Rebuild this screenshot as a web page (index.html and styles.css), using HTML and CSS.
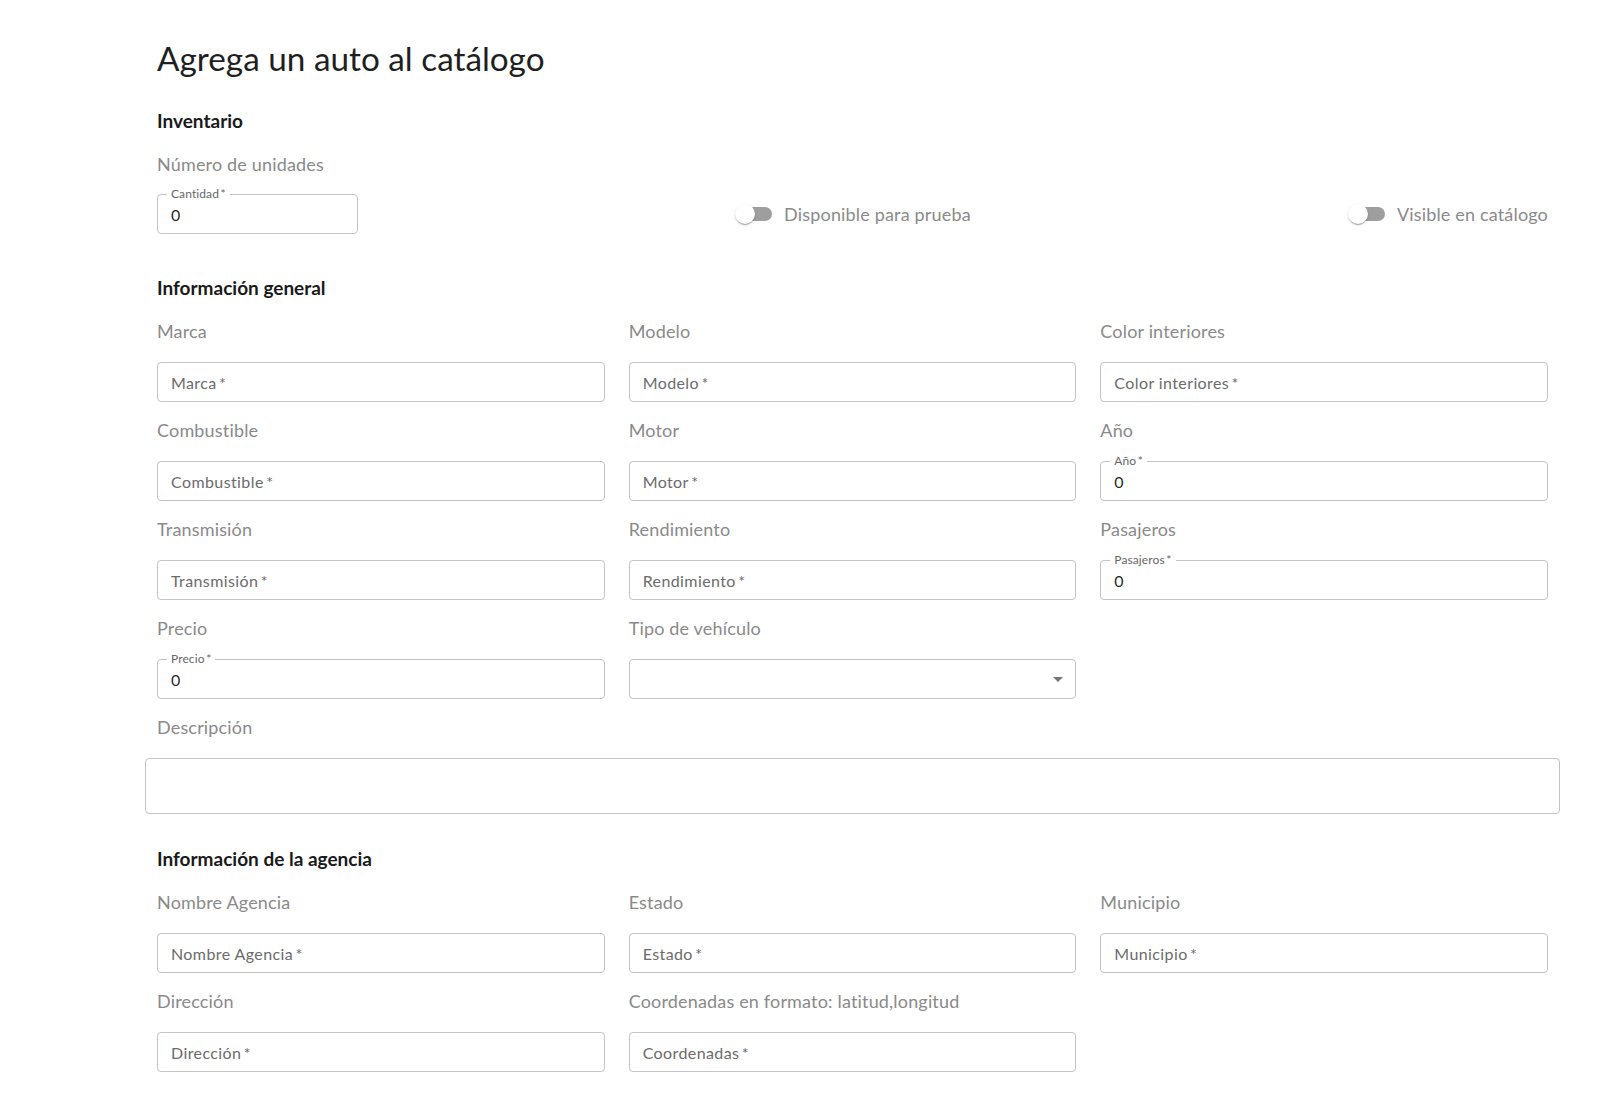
FILE: index.html
```html
<!DOCTYPE html>
<html lang="es">
<head>
<meta charset="utf-8">
<title>Agrega un auto al catálogo</title>
<link rel="stylesheet" href="styles.css">
</head>
<body>
<main class="page">
  <h1 class="title">Agrega un auto al catálogo</h1>

  <h2 class="section">Inventario</h2>
  <div class="label">Número de unidades</div>
  <div class="inv-row">
    <div class="input filled qty"><span class="float">Cantidad&#8201;*</span><span class="value">0</span></div>
    <div class="toggle">
      <span class="switch"><span class="track"></span><span class="thumb"></span></span>
      <span class="toggle-text">Disponible para prueba</span>
    </div>
    <div class="toggle">
      <span class="switch"><span class="track"></span><span class="thumb"></span></span>
      <span class="toggle-text">Visible en catálogo</span>
    </div>
  </div>

  <h2 class="section sec-general">Información general</h2>
  <div class="grid">
    <div class="field"><div class="label">Marca</div><div class="input"><span class="ph">Marca&#8201;*</span></div></div>
    <div class="field"><div class="label">Modelo</div><div class="input"><span class="ph">Modelo&#8201;*</span></div></div>
    <div class="field"><div class="label">Color interiores</div><div class="input"><span class="ph">Color interiores&#8201;*</span></div></div>

    <div class="field"><div class="label">Combustible</div><div class="input"><span class="ph">Combustible&#8201;*</span></div></div>
    <div class="field"><div class="label">Motor</div><div class="input"><span class="ph">Motor&#8201;*</span></div></div>
    <div class="field"><div class="label">Año</div><div class="input filled"><span class="float">Año&#8201;*</span><span class="value">0</span></div></div>

    <div class="field"><div class="label">Transmisión</div><div class="input"><span class="ph">Transmisión&#8201;*</span></div></div>
    <div class="field"><div class="label">Rendimiento</div><div class="input"><span class="ph">Rendimiento&#8201;*</span></div></div>
    <div class="field"><div class="label">Pasajeros</div><div class="input filled"><span class="float">Pasajeros&#8201;*</span><span class="value">0</span></div></div>

    <div class="field"><div class="label">Precio</div><div class="input filled"><span class="float">Precio&#8201;*</span><span class="value">0</span></div></div>
    <div class="field"><div class="label">Tipo de vehículo</div><div class="input select"><svg class="arrow" width="24" height="24" viewBox="0 0 24 24"><path d="M7 10l5 5 5-5z" fill="#757575"/></svg></div></div>
    <div class="field empty"></div>

    <div class="field full"><div class="label">Descripción</div><div class="textarea"></div></div>
  </div>

  <h2 class="section sec-agency">Información de la agencia</h2>
  <div class="grid">
    <div class="field"><div class="label">Nombre Agencia</div><div class="input"><span class="ph">Nombre Agencia&#8201;*</span></div></div>
    <div class="field"><div class="label">Estado</div><div class="input"><span class="ph">Estado&#8201;*</span></div></div>
    <div class="field"><div class="label">Municipio</div><div class="input"><span class="ph">Municipio&#8201;*</span></div></div>

    <div class="field"><div class="label">Dirección</div><div class="input"><span class="ph">Dirección&#8201;*</span></div></div>
    <div class="field"><div class="label">Coordenadas en formato: latitud,longitud</div><div class="input"><span class="ph">Coordenadas&#8201;*</span></div></div>
  </div>
</main>
</body>
</html>
```

FILE: styles.css
```css
html, body {
  margin: 0;
  padding: 0;
  background: #ffffff;
}

body {
  font-family: Lato, "Noto Sans", "Liberation Sans", sans-serif;
  color: rgba(0, 0, 0, 0.87);
}

.page {
  width: 1391px;
  margin-left: 157px;
  padding-top: 37px;
  padding-bottom: 16px;
}

.title {
  margin: 0;
  font-size: 33.3px;
  line-height: 42px;
  font-weight: 400;
  color: #1f1f1f;
}

.section {
  margin: 30px 0 19px;
  font-size: 19px;
  line-height: 24px;
  font-weight: 700;
  color: #1a1a1a;
}

.sec-general {
  margin-top: 42px;
}

.sec-agency {
  margin-top: 33px;
}

.label {
  font-size: 18px;
  line-height: 24px;
  letter-spacing: 0.17px;
  color: #8a8a8a;
  white-space: nowrap;
}

.inv-row {
  margin-top: 18px;
  display: flex;
  justify-content: space-between;
  align-items: center;
}

.input {
  position: relative;
  box-sizing: border-box;
  height: 40px;
  border: 1px solid #c4c4c4;
  border-radius: 4px;
  padding: 0 13px;
  display: flex;
  align-items: center;
  font-size: 16px;
  background: #fff;
}

.qty {
  width: 201px;
}

.ph {
  color: #6b6b6b;
  font-size: 16px;
  letter-spacing: 0.4px;
  padding-top: 1px;
}

.value {
  color: rgba(0, 0, 0, 0.87);
  font-size: 16px;
  padding-top: 1px;
}

.float {
  position: absolute;
  top: -7px;
  left: 9px;
  padding: 0 4px;
  background: #fff;
  font-size: 12px;
  line-height: 12px;
  letter-spacing: 0.1px;
  color: #666;
}

.select {
  justify-content: flex-end;
  padding-right: 5px;
}

.arrow {
  display: block;
}

.toggle {
  display: flex;
  align-items: center;
}

.switch {
  position: relative;
  display: block;
  width: 58px;
  height: 38px;
}

.track {
  position: absolute;
  left: 12px;
  top: 12px;
  width: 34px;
  height: 14px;
  border-radius: 7px;
  background: #000;
  opacity: 0.38;
}

.thumb {
  position: absolute;
  left: 9px;
  top: 9px;
  width: 20px;
  height: 20px;
  border-radius: 50%;
  background: #fff;
  box-shadow: 0px 2px 1px -1px rgba(0, 0, 0, 0.2), 0px 1px 1px 0px rgba(0, 0, 0, 0.14), 0px 1px 3px 0px rgba(0, 0, 0, 0.12);
}

.toggle-text {
  font-size: 18px;
  line-height: 24px;
  letter-spacing: 0.17px;
  color: #8a8a8a;
}

.grid {
  display: grid;
  grid-template-columns: repeat(3, 1fr);
  column-gap: 24px;
  row-gap: 16px;
}

.field {
  display: flex;
  flex-direction: column;
  gap: 19px;
}

.full {
  grid-column: 1 / -1;
}

.textarea {
  box-sizing: border-box;
  height: 56px;
  margin: 0 -12px;
  border: 1px solid #c4c4c4;
  border-radius: 4px;
  background: #fff;
}
```
